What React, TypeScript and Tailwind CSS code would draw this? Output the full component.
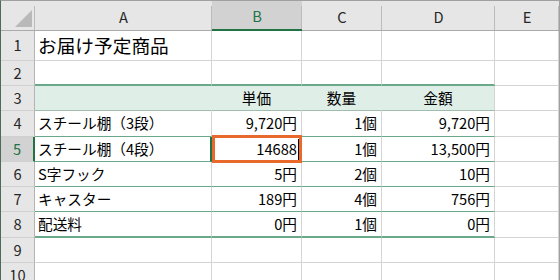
import type { ReactNode } from 'react';

const GREEN = 'border-b-[#6aa88c]';

interface Item {
  n: number;
  name: string;
  price: string;
  qty: string;
  total: string;
  h: string;
}

const items: Item[] = [
  { n: 4, name: 'スチール棚（3段）', price: '9,720円', qty: '1個', total: '9,720円', h: 'h-[26px]' },
  { n: 5, name: 'スチール棚（4段）', price: '14688', qty: '1個', total: '13,500円', h: 'h-[25px]' },
  { n: 6, name: 'S字フック', price: '5円', qty: '2個', total: '10円', h: 'h-[25px]' },
  { n: 7, name: 'キャスター', price: '189円', qty: '4個', total: '756円', h: 'h-[25px]' },
  { n: 8, name: '配送料', price: '0円', qty: '1個', total: '0円', h: 'h-[26px]' },
];

function Cell({ w, className = '', children }: { w: string; className?: string; children?: ReactNode }) {
  return (
    <div className={`${w} shrink-0 flex items-center px-[4px] border-r border-b whitespace-nowrap ${className}`}>
      {children}
    </div>
  );
}

function RowHead({ n, active = false }: { n: number; active?: boolean }) {
  return (
    <div
      className={`w-[34px] shrink-0 flex items-center justify-center border-b border-b-[#d0d0d0] ${
        active
          ? 'bg-[#d2d2d2] text-[#217346] border-r-2 border-r-[#217346]'
          : 'bg-[#e6e6e6] text-[#262626] border-r border-r-[#b4b4b4]'
      }`}
    >
      {n}
    </div>
  );
}

function ColHead({ w, label, active = false }: { w: string; label: string; active?: boolean }) {
  return (
    <div
      className={`${w} shrink-0 relative flex items-center justify-center pt-[3px] after:absolute after:right-0 after:top-[5px] after:bottom-0 after:w-px after:bg-[#bcbcbc] ${
        active
          ? 'bg-[#d2d2d2] text-[#217346] border-b-2 border-b-[#217346]'
          : 'bg-[#e6e6e6] text-[#262626] border-b border-b-[#ababab]'
      }`}
    >
      {label}
    </div>
  );
}

const gray = 'border-r-[#d4d4d4] border-b-[#d4d4d4]';

export default function App() {
  return (
    <div className="w-[560px] h-[280px] overflow-hidden bg-white border-l border-l-[#4d6b5a] border-t border-t-[#a0a0a0] border-r border-r-[#a0a0a0] font-['Noto_Sans_CJK_JP','Noto_Sans',sans-serif] text-[14.67px] leading-none text-black">
      {/* column headers */}
      <div className="flex h-[30px]">
        <div className="w-[34px] shrink-0 relative bg-[#e6e6e6] border-b border-b-[#ababab] after:absolute after:right-0 after:top-[5px] after:bottom-0 after:w-px after:bg-[#bcbcbc]">
          <svg className="absolute inset-0" width="34" height="29" viewBox="0 0 34 29">
            <polygon points="14,26 31,9 31,26" fill="#b9b9b9" />
          </svg>
        </div>
        <ColHead w="w-[177px]" label="A" />
        <ColHead w="w-[90px]" label="B" active />
        <ColHead w="w-[80px]" label="C" />
        <ColHead w="w-[113px]" label="D" />
        <ColHead w="w-[64px]" label="E" />
      </div>

      {/* 1: title */}
      <div className="flex h-[30px]">
        <RowHead n={1} />
        <Cell w="w-[177px]" className={`${gray} text-[18.7px] pl-[3px]`}>お届け予定商品</Cell>
        <Cell w="w-[90px]" className={gray} />
        <Cell w="w-[80px]" className={gray} />
        <Cell w="w-[113px]" className={gray} />
        <Cell w="w-[64px]" className={gray} />
      </div>

      {/* 2: empty, table top rule */}
      <div className="flex h-[25px]">
        <RowHead n={2} />
        <Cell w="w-[177px]" className={`border-r-[#d4d4d4] border-b-2 ${GREEN}`} />
        <Cell w="w-[90px]" className={`border-r-[#d4d4d4] border-b-2 ${GREEN}`} />
        <Cell w="w-[80px]" className={`border-r-[#d4d4d4] border-b-2 ${GREEN}`} />
        <Cell w="w-[113px]" className={`border-r-[#d4d4d4] border-b-2 ${GREEN}`} />
        <Cell w="w-[64px]" className={gray} />
      </div>

      {/* 3: table header */}
      <div className="flex h-[25px]">
        <RowHead n={3} />
        <Cell w="w-[177px]" className="bg-[#e0eee8] border-r-[#e0eee8] border-b-[#9fbcaf]" />
        <Cell w="w-[90px]" className="bg-[#e0eee8] border-r-[#e0eee8] border-b-[#9fbcaf] justify-center">単価</Cell>
        <Cell w="w-[80px]" className="bg-[#e0eee8] border-r-[#e0eee8] border-b-[#9fbcaf] justify-center">数量</Cell>
        <Cell w="w-[113px]" className="bg-[#e0eee8] border-r-[#d4d4d4] border-b-[#9fbcaf] justify-center">金額</Cell>
        <Cell w="w-[64px]" className={gray} />
      </div>

      {items.map((it, i) => {
        const last = i === items.length - 1;
        const active = it.n === 5;
        const rule = last ? `border-b-2 ${GREEN}` : GREEN;
        return (
          <div key={it.n} className={`flex ${it.h}`}>
            <RowHead n={it.n} active={active} />
            <Cell
              w="w-[177px]"
              className={`${rule} pl-[3px] ${active ? 'border-r-2 border-r-[#217346]' : 'border-r-[#d4d4d4]'}`}
            >
              {it.name}
            </Cell>
            {active ? (
              <Cell w="w-[90px]" className={`relative ${rule} border-r-[#d4d4d4]`}>
                <div className="absolute z-10 left-0 -right-[1px] -top-[2px] -bottom-[2px] border-[3px] border-[#e9692c] bg-white flex justify-end">
                  <span className="self-center">{it.price}</span>
                  <span className="w-px ml-[1px] mt-[1px] self-stretch bg-black" />
                </div>
              </Cell>
            ) : (
              <Cell w="w-[90px]" className={`${rule} border-r-[#d4d4d4] justify-end`}>{it.price}</Cell>
            )}
            <Cell w="w-[80px]" className={`${rule} border-r-[#d4d4d4] justify-end`}>{it.qty}</Cell>
            <Cell w="w-[113px]" className={`${rule} border-r-[#d4d4d4] justify-end`}>{it.total}</Cell>
            <Cell w="w-[64px]" className={gray} />
          </div>
        );
      })}

      {[9, 10].map((n) => (
        <div key={n} className="flex h-[25px]">
          <RowHead n={n} />
          <Cell w="w-[177px]" className={gray} />
          <Cell w="w-[90px]" className={gray} />
          <Cell w="w-[80px]" className={gray} />
          <Cell w="w-[113px]" className={gray} />
          <Cell w="w-[64px]" className={gray} />
        </div>
      ))}
    </div>
  );
}
